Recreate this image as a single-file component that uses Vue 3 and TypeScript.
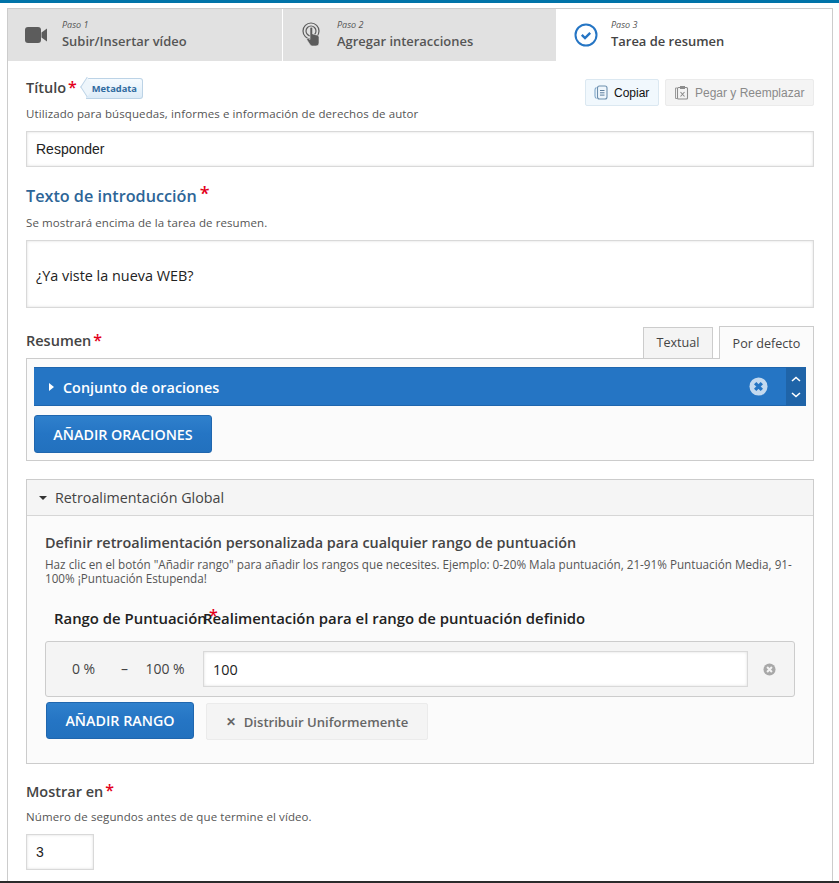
<template>
  <div class="page">
    <div class="topbar"></div>
    <div class="editor">
      <div class="steps">
        <div v-for="s in steps" :key="s.num" class="step" :class="{ active: s.active }">
          <svg v-if="s.num === 1" class="step-icon" viewBox="0 0 22 16" width="22" height="16">
            <rect x="0" y="0" width="16" height="16" rx="3" fill="#5c5c5c" />
            <path d="M16.500 5.500 22 1.500V14.500L16.500 10.500Z" fill="#5c5c5c" />
          </svg>
          <svg v-else-if="s.num === 2" class="step-icon" viewBox="0 0 22 26" width="22" height="26">
            <circle cx="10" cy="9" r="8" fill="none" stroke="#5c5c5c" stroke-width="1.200" />
            <circle cx="10" cy="9" r="5" fill="none" stroke="#5c5c5c" stroke-width="1.200" />
            <path d="M9 6.500a1.300 1.300 0 0 1 2.600 0V12l5 1.200c.9.300 1.400 1 1.400 2V21a3 3 0 0 1-3 3h-3.500a3 3 0 0 1-2.400-1.200L6 18c-.6-1 .5-2.200 1.600-1.400L9 17.500Z" fill="#5c5c5c" stroke="#e1e1e1" stroke-width=".6" />
          </svg>
          <svg v-else class="step-icon" viewBox="0 0 24 24" width="24" height="24">
            <circle cx="12" cy="12" r="10.500" fill="none" stroke="#2575c4" stroke-width="2" />
            <path d="M7.800 11.800 11 15l5.200-5.200" fill="none" stroke="#2575c4" stroke-width="2.400" />
          </svg>
          <div class="step-text">
            <div class="step-num">Paso {{ s.num }}</div>
            <div class="step-name">{{ s.name }}</div>
          </div>
        </div>
      </div>

      <div class="content">
        <div class="title-head">
          <div>
            <div class="label-row">
              <span class="label">Título</span><span class="req">*</span>
              <span class="meta">Metadata</span>
            </div>
            <div class="desc">Utilizado para búsquedas, informes e información de derechos de autor</div>
          </div>
          <div class="clip-btns">
            <button class="clip copy">
              <svg viewBox="0 0 14 15" width="14" height="15">
                <path d="M2.500 2.500C1.200 3 1 3.500 1 5v6c0 1.500.3 2 1.500 2.500" fill="none" stroke="#7fa6c9" stroke-width="1.100" />
                <rect x="3.500" y="1" width="9.500" height="13" rx="2" fill="#eef6fc" stroke="#6d8fae" stroke-width="1.100" />
                <path d="M6 5.500h4.500M6 7.800h4.500M6 10.100h4.500" stroke="#5d7e9d" stroke-width="1" />
              </svg>
              Copiar
            </button>
            <button class="clip paste">
              <svg viewBox="0 0 15 15" width="15" height="15">
                <path d="M3 3H1.500v10.500H3" fill="none" stroke="#9a9a9a" stroke-width="1" />
                <rect x="3.500" y="2.500" width="10" height="11.500" rx="1" fill="none" stroke="#8c8c8c" stroke-width="1.100" />
                <rect x="6" y="1" width="5" height="3" fill="#8c8c8c" />
                <path d="M6.500 7 10.500 11.500M10.500 7 6.500 11.500" stroke="#8c8c8c" stroke-width="1.100" />
              </svg>
              Pegar y Reemplazar
            </button>
          </div>
        </div>
        <input class="field title-input" value="Responder" />

        <div class="intro-label"><span>Texto de introducción</span><span class="req big">*</span></div>
        <div class="desc intro-desc">Se mostrará encima de la tarea de resumen.</div>
        <div class="field textarea">¿Ya viste la nueva WEB?</div>

        <div class="summary-head">
          <div class="summary-label"><span class="label">Resumen</span><span class="req">*</span></div>
          <div class="tabs">
            <div class="tab">Textual</div>
            <div class="tab current">Por defecto</div>
          </div>
        </div>
        <div class="summary-box">
          <div class="group-bar">
            <span class="caret-right"></span>
            <span class="group-title">Conjunto de oraciones</span>
            <span class="remove">
              <svg viewBox="0 0 20 20" width="19" height="19">
                <circle cx="10" cy="10" r="9.500" fill="#c3d9ef" />
                <path d="M6.500 6.500 13.500 13.500M13.500 6.500 6.500 13.500" stroke="#2575c4" stroke-width="3.500" />
              </svg>
            </span>
            <span class="order">
              <svg viewBox="0 0 10 6" width="10" height="6"><path d="M1 5 5 1.500 9 5" fill="none" stroke="#fff" stroke-width="1.600" /></svg>
              <svg viewBox="0 0 10 6" width="10" height="6"><path d="M1 1 5 4.500 9 1" fill="none" stroke="#fff" stroke-width="1.600" /></svg>
            </span>
          </div>
          <button class="primary add-sentences">AÑADIR ORACIONES</button>
        </div>

        <div class="feedback">
          <div class="feedback-head"><span class="caret-down"></span>Retroalimentación Global</div>
          <div class="feedback-body">
            <div class="fb-title">Definir retroalimentación personalizada para cualquier rango de puntuación</div>
            <div class="fb-desc">Haz clic en el botón "Añadir rango" para añadir los rangos que necesites. Ejemplo: 0-20% Mala puntuación, 21-91% Puntuación Media, 91-100% ¡Puntuación Estupenda!</div>
            <div class="range-head">
              <div class="range-col">Rango de Puntuación<span class="req over">*</span></div>
              <div>Realimentación para el rango de puntuación definido</div>
            </div>
            <div class="range-row">
              <span class="from">0 %</span>
              <span class="dash">–</span>
              <span class="to">100 %</span>
              <input class="field range-input" value="100" />
              <svg class="range-remove" viewBox="0 0 14 14" width="13" height="13">
                <circle cx="7" cy="7" r="6.500" fill="#a8a8a8" />
                <path d="M4.400 4.400 9.600 9.600M9.600 4.400 4.400 9.600" stroke="#f3f3f3" stroke-width="2.200" />
              </svg>
            </div>
            <div class="range-btns">
              <button class="primary add-range">AÑADIR RANGO</button>
              <button class="distribute"><span class="x">✕</span>Distribuir Uniformemente</button>
            </div>
          </div>
        </div>

        <div class="show-label"><span class="label">Mostrar en</span><span class="req">*</span></div>
        <div class="desc show-desc">Número de segundos antes de que termine el vídeo.</div>
        <input class="field show-input" value="3" />
      </div>
    </div>
    <div class="bottombar"></div>
  </div>
</template>

<script setup lang="ts">
interface Step {
  num: number;
  name: string;
  active?: boolean;
}

const steps: Step[] = [
  { num: 1, name: 'Subir/Insertar vídeo' },
  { num: 2, name: 'Agregar interacciones' },
  { num: 3, name: 'Tarea de resumen', active: true },
];
</script>

<style>
html,
body {
  margin: 0;
  background: #fff;
  overflow: hidden;
}
</style>

<style scoped>
.page {
  height: 883px;
  display: flex;
  flex-direction: column;
  overflow: hidden;
  font-family: 'Open Sans', sans-serif;
  color: #444;
  background: #fff;
}
.topbar {
  flex: none;
  height: 3px;
  background: #0073a8;
}
.editor {
  flex: 1;
  min-height: 0;
  margin: 5px 6px 0 7px;
  border: 1px solid #ccc;
  border-bottom: 0;
  overflow: hidden;
}
.bottombar {
  flex: none;
  height: 2px;
  background: #2b2b2b;
}
.steps {
  display: flex;
  height: 52px;
}
.step {
  width: 275px;
  flex: none;
  display: flex;
  align-items: center;
  box-sizing: border-box;
  padding-left: 17px;
  background: #e1e1e1;
  border-right: 1px solid #fff;
}
.step:nth-child(2) {
  width: 273px;
  border-right: 0;
  padding-left: 18px;
}
.step.active {
  flex: 1;
  background: #fff;
  border-right: 0;
  padding-left: 18px;
}
.step-icon {
  flex: none;
  margin-right: 15px;
}
.step:nth-child(2) .step-icon {
  margin-right: 14px;
}
.step.active .step-icon {
  margin-right: 13px;
}
.step-text {
  margin-top: -1px;
}
.step-num {
  font-size: 9px;
  font-style: italic;
  line-height: 12px;
  color: #555;
}
.step-name {
  font-size: 12.950px;
  font-weight: 600;
  line-height: 20px;
  color: #555;
}
.step.active .step-name {
  color: #444;
}
.content {
  padding: 0 18px;
}
.title-head {
  display: flex;
  justify-content: space-between;
  align-items: flex-start;
  padding-top: 17px;
}
.label-row {
  display: flex;
  align-items: center;
  height: 20px;
}
.label {
  font-size: 14.500px;
  font-weight: 600;
  line-height: 22px;
  color: #444;
}
.req {
  color: #e3001b;
  font-size: 16px;
  font-weight: 600;
  line-height: 14px;
  margin-left: 2px;
  align-self: flex-start;
  margin-top: 2px;
}
.meta {
  position: relative;
  z-index: 0;
  margin-left: 9px;
  height: 21px;
  box-sizing: border-box;
  padding: 0 5px 0 6px;
  font-size: 9.300px;
  font-weight: 700;
  line-height: 19px;
  color: #2f6a9f;
  background: linear-gradient(#f6fbff, #dcebf7);
  border: 1px solid #bcd3e6;
  border-left: 0;
  border-radius: 0 3px 3px 0;
}
.meta::before {
  content: '';
  position: absolute;
  left: -5px;
  top: 2.500px;
  width: 11px;
  height: 11px;
  transform: rotate(45deg) skew(12deg, 12deg);
  background: #edf5fb;
  border-left: 1px solid #bcd3e6;
  border-bottom: 1px solid #bcd3e6;
  z-index: -1;
}
.desc {
  font-size: 11.500px;
  line-height: 16px;
  color: #555;
  letter-spacing: 0.1px;
}
.label-row + .desc {
  margin-top: 8px;
}
.clip-btns {
  display: flex;
  gap: 6px;
  margin-top: 1px;
}
.clip {
  height: 27px;
  display: flex;
  align-items: center;
  gap: 6px;
  padding: 0 8px;
  font-family: 'Liberation Sans', sans-serif;
  font-size: 12px;
  border-radius: 2px;
  box-sizing: border-box;
}
.copy {
  width: 74px;
  color: #111;
  background: #f1f8fd;
  border: 1px solid #dbe8f1;
}
.paste {
  width: 149px;
  color: #8a8a8a;
  background: #f4f4f4;
  border: 1px solid #ebebeb;
}
.field {
  display: block;
  box-sizing: border-box;
  border: 1px solid #d9d9d9;
  background: #fff;
  color: #222;
  font-family: 'Liberation Sans', sans-serif;
  font-size: 14px;
  outline: 0;
  box-shadow: inset 0 0 3px #ddd;
}
.title-input {
  width: 788px;
  height: 36px;
  margin-top: 9px;
  padding: 0 9px;
}
.intro-label {
  display: flex;
  margin-top: 18px;
  height: 22px;
  font-size: 16.200px;
  font-weight: 600;
  line-height: 22px;
  color: #2d6597;
}
.req.big {
  font-size: 18px;
  margin-left: 3px;
  margin-top: 1px;
}
.intro-desc {
  margin-top: 8px;
}
.textarea {
  width: 788px;
  height: 68px;
  margin-top: 9px;
  padding: 26px 9px 0;
  line-height: 17px;
  font-family: 'Open Sans', sans-serif;
  font-size: 14.400px;
}
.summary-head {
  display: flex;
  justify-content: space-between;
  align-items: flex-end;
  margin-top: 18px;
  height: 32px;
}
.summary-label {
  display: flex;
  align-self: flex-start;
  margin-top: 4px;
}
.summary-label .req {
  margin-top: 3px;
}
.tabs {
  display: flex;
  gap: 6px;
  align-items: flex-end;
  margin-bottom: -1px;
  position: relative;
  z-index: 1;
}
.tab {
  width: 70px;
  height: 32px;
  box-sizing: border-box;
  text-align: center;
  font-size: 12.600px;
  line-height: 29px;
  color: #444;
  background: #f4f4f4;
  border: 1px solid #ccc;
}
.tab.current {
  width: 95px;
  height: 33px;
  line-height: 33px;
  background: #fbfbfb;
  border-bottom: 0;
}
.summary-box {
  box-sizing: border-box;
  height: 103px;
  padding: 8px 7px;
  background: #fbfbfb;
  border: 1px solid #ccc;
}
.group-bar {
  display: flex;
  align-items: center;
  height: 39px;
  background: #2575c4;
  border-top: 1px solid #1f66ae;
  border-bottom: 1px solid #1f66ae;
  box-sizing: border-box;
  color: #fff;
}
.caret-right {
  width: 0;
  height: 0;
  margin-left: 15px;
  border-left: 5px solid #fff;
  border-top: 4.500px solid transparent;
  border-bottom: 4.500px solid transparent;
}
.group-title {
  flex: 1;
  margin-left: 9px;
  padding-top: 1px;
  font-size: 14.400px;
  font-weight: 600;
}
.remove {
  display: flex;
  margin-right: 18px;
}
.order {
  width: 20px;
  align-self: stretch;
  margin: -1px 0;
  background: #1f64a8;
  display: flex;
  flex-direction: column;
  align-items: center;
  justify-content: center;
  gap: 10px;
}
.primary {
  display: block;
  box-sizing: border-box;
  color: #fff;
  font-family: 'Open Sans', sans-serif;
  font-size: 14.300px;
  font-weight: 600;
  background: linear-gradient(#2f80cc, #2575c4 50%, #2271be);
  border: 1px solid #1f66ae;
  border-radius: 3px;
  padding: 0;
}
.add-sentences {
  width: 178px;
  height: 38px;
  margin-top: 9px;
}
.feedback {
  margin-top: 18px;
  height: 285px;
  box-sizing: border-box;
  background: #fbfbfb;
  border: 1px solid #ccc;
}
.feedback-head {
  display: flex;
  align-items: center;
  height: 36px;
  box-sizing: border-box;
  background: #f5f5f5;
  border-bottom: 1px solid #d6d6d6;
  font-size: 14.300px;
  color: #444;
}
.caret-down {
  width: 0;
  height: 0;
  margin: 0 8px 0 12px;
  border-top: 4px solid #333;
  border-left: 4px solid transparent;
  border-right: 4px solid transparent;
}
.feedback-body {
  padding: 17px 18px 0;
}
.fb-title {
  font-size: 14.400px;
  font-weight: 600;
  line-height: 20px;
  color: #444;
}
.fb-desc {
  margin-top: 4px;
  font-size: 11.700px;
  line-height: 14px;
  color: #555;
}
.range-head {
  display: flex;
  margin-top: 23px;
  padding-left: 9px;
  font-size: 14.900px;
  font-weight: 600;
  line-height: 20px;
  color: #222;
  white-space: nowrap;
}
.range-col {
  position: relative;
  width: 149px;
}
.req.over {
  position: absolute;
  left: 155px;
  top: 0;
  margin: 0;
}
.range-row {
  display: flex;
  align-items: center;
  box-sizing: border-box;
  width: 750px;
  height: 56px;
  margin-top: 13px;
  background: #f4f4f4;
  border: 1px solid #ccc;
  border-radius: 3px;
  font-size: 14px;
  color: #444;
}
.from,
.dash,
.to {
  padding-bottom: 2px;
  text-align: center;
}
.from {
  width: 75px;
}
.dash {
  width: 6px;
}
.to {
  width: 72px;
  margin-left: 2px;
  margin-right: 2px;
}
.range-input {
  width: 545px;
  height: 36px;
  padding: 0 9px;
  font-family: 'Open Sans', sans-serif;
  font-size: 14.400px;
}
.range-remove {
  margin-left: 15px;
}
.range-btns {
  display: flex;
  align-items: flex-start;
  gap: 12px;
  margin-top: 5px;
  margin-left: 1px;
}
.add-range {
  width: 148px;
  height: 37px;
}
.distribute {
  display: flex;
  align-items: center;
  justify-content: center;
  width: 222px;
  height: 37px;
  margin-top: 1px;
  padding: 0;
  box-sizing: border-box;
  background: #f4f4f4;
  border: 1px solid #ebebeb;
  border-radius: 2px;
  font-family: 'Open Sans', sans-serif;
  font-size: 13.100px;
  font-weight: 600;
  color: #666;
}
.x {
  margin-right: 8px;
  font-size: 12px;
}
.show-label {
  display: flex;
  margin-top: 17px;
}
.show-desc {
  margin-top: 6px;
}
.show-input {
  width: 68px;
  height: 36px;
  margin-top: 9px;
  padding: 0 9px;
}
</style>
